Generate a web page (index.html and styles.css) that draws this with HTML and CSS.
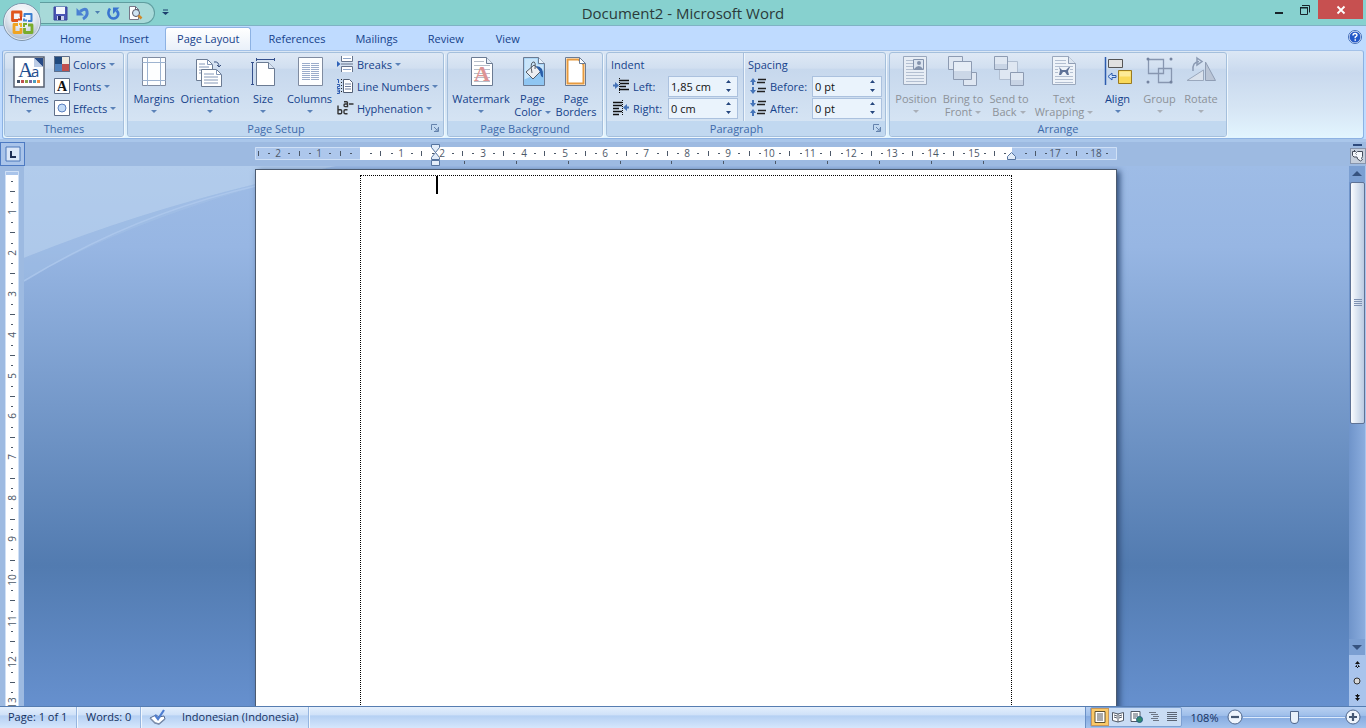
FILE: index.html
```html
<!DOCTYPE html>
<html lang="en">
<head>
<meta charset="utf-8">
<title>Document2 - Microsoft Word</title>
<link rel="stylesheet" href="styles.css">
</head>
<body>
<div class="app">
  <header class="titlebar">
    <div class="quick-access">
      <button class="qa-btn" aria-label="Save"><svg width="15" height="15" viewBox="0 0 15 15"><path d="M1 1h13v13H1z" fill="#4a55b4" stroke="#38439a"/><path d="M3 1h9v7H3z" fill="#f3f5fc"/><path d="M4 10h7v4H4z" fill="#c9cfee"/><path d="M5 10h3v4H5z" fill="#232a66"/></svg></button>
      <button class="qa-btn" aria-label="Undo"><svg width="15" height="15" viewBox="0 0 15 15"><path d="M5 5.500Q11 1 12 5.500T8 13" fill="none" stroke="#4a80d2" stroke-width="3"/><path d="M1.500 2v7.500H9z" fill="#4a80d2"/></svg></button>
      <button class="qa-arrow" aria-label="Undo list"><svg width="7" height="4" viewBox="0 0 7 4"><path d="M1 0h5L3.500 3z" fill="#4d7fb0"/></svg></button>
      <button class="qa-btn" aria-label="Repeat"><svg width="15" height="15" viewBox="0 0 15 15"><path d="M4 2.500C.500 7 3.500 12.500 7.500 12.500S14 8 10.500 4.500" fill="none" stroke="#3a75d0" stroke-width="2.600"/><path d="M7 1.500h6.500L7 8z" fill="#3a75d0"/></svg></button>
      <button class="qa-btn" aria-label="Print Preview"><svg width="16" height="16" viewBox="0 0 16 16"><path d="M2.500 1.500h6l3 3v10h-9z" fill="#fff" stroke="#778"/><path d="M8.500 1.500v3h3" fill="none" stroke="#667"/><circle cx="9" cy="8" r="3.500" fill="#cfe5f3" stroke="#556"/><path d="M11.500 10.500l3 3" stroke="#d08a2c" stroke-width="2.500"/></svg></button>
    </div>
    <button class="qa-more" aria-label="Customize Quick Access Toolbar"><svg width="7" height="7" viewBox="0 0 7 7"><path d="M1 1h5" stroke="#1d3f6e"/><path d="M0 3h7L3.500 6z" fill="#1d3f6e"/></svg></button>
    <h1 class="title">Document2 - Microsoft Word</h1>
    <div class="window-controls">
      <button class="win-btn" aria-label="Minimize"><svg width="12" height="12" viewBox="0 0 12 12"><path d="M2 8h8v2H2z" fill="#17242a"/></svg></button>
      <button class="win-btn" aria-label="Restore"><svg width="12" height="12" viewBox="0 0 12 12" fill="none" stroke="#17242a"><path d="M1.500 4h7v6.500h-7z"/><path d="M1 3.500h8M3 1.500h7.500v7" /></svg></button>
      <button class="win-btn close" aria-label="Close"><svg width="10" height="10" viewBox="0 0 10 10"><path d="M1.500 1.500l7 7M8.500 1.500l-7 7" stroke="#fff" stroke-width="1.800"/></svg></button>
    </div>
  </header>
  <button class="office" aria-label="Office Button">
    <svg width="42" height="42" viewBox="0 0 42 42">
      <defs><radialGradient id="orb" cx=".5" cy=".3" r=".75"><stop offset="0" stop-color="#fff"/><stop offset=".5" stop-color="#e3e9f1"/><stop offset="1" stop-color="#9fb0c6"/></radialGradient></defs>
      <circle cx="21" cy="21" r="18.500" fill="url(#orb)" stroke="#7f95ab"/>
      <circle cx="21" cy="21" r="17.500" fill="none" stroke="#f5f9fd" stroke-opacity=".7"/>
      <g fill="none" stroke-width="2.800" stroke-linejoin="round">
        <path d="M17 19.500H11.500V11h8.500v5" stroke="#e0561c"/>
        <path d="M23.500 16v-3h7V20H27" stroke="#3b7fd0" stroke-width="2"/>
        <path d="M17 23.500h-4v8h7V27" stroke="#f0a422"/>
        <path d="M23.500 27v4.500h7.500V24H27" stroke="#79ac2c"/>
      </g>
      <g stroke-width="2"><path d="M17 18.500h3v-3" stroke="#d33f1a" fill="none"/><path d="M23 17.500v2h3" stroke="#4b8ad4" fill="none"/><path d="M18 23h2v3" stroke="#efb42a" fill="none"/><path d="M26 23h-3v3" stroke="#79ac2c" fill="none"/></g>
    </svg>
  </button>

  <nav class="tabs">
    <button class="tab">Home</button>
    <button class="tab">Insert</button>
    <button class="tab active">Page Layout</button>
    <button class="tab">References</button>
    <button class="tab">Mailings</button>
    <button class="tab">Review</button>
    <button class="tab">View</button>
    <button class="help" aria-label="Help"><svg width="14" height="14" viewBox="0 0 14 14"><circle cx="7" cy="7" r="6.500" fill="#fff" stroke="#3f6cb8"/><circle cx="7" cy="7" r="5.500" fill="#2459c8"/><path d="M5 5.500Q5 3.500 7 3.500T9 5.300Q9 6.300 7.200 7.200V8.300" fill="none" stroke="#fff" stroke-width="1.400"/><path d="M6.500 9.200H8v1.500H6.500z" fill="#fff"/></svg></button>
  </nav>

  <div class="ribbon">
    <section class="group themes">
      <div class="tools">
        <button class="big w-themes"><svg width="32" height="32" viewBox="0 0 32 32"><path d="M1 1h30v30H1z" fill="#fff" stroke="#555f70" stroke-width="1.500"/><path d="M21 2h9v9z" fill="#274a86"/><path d="M21 2l9 9h-9z" fill="#bccce6"/><text x="5" y="21" class="icon-serif" font-size="21" fill="#1f4e8f">A</text><text x="18" y="21" class="icon-sans" font-size="15" fill="#1f4e8f">a</text><path d="M4 24h3v3H4z" fill="#44546a"/><path d="M8 24h3v3H8z" fill="#c0504d"/><path d="M12 24h3v3h-3z" fill="#8aa34a"/><path d="M16 24h3v3h-3z" fill="#7a68a0"/><path d="M20 24h3v3h-3z" fill="#4b9fc0"/><path d="M24 24h3v3h-3z" fill="#f09040"/></svg><span>Themes</span><i class="caret-down"></i></button>
        <div class="stack">
          <button class="small"><svg width="16" height="16" viewBox="0 0 16 16"><path d="M0 0h8v8H0z" fill="#1f497d"/><path d="M8 0h8v8H8z" fill="#eeece1"/><path d="M0 8h8v8H0z" fill="#4f81bd"/><path d="M8 8h8v8H8z" fill="#c0504d"/><path d="M.5.500h15v15H.5z" fill="none" stroke="#5f6f8a"/></svg>Colors<i class="caret-down"></i></button>
          <button class="small"><svg width="16" height="16" viewBox="0 0 16 16"><path d="M.5.500h15v15H.5z" fill="#fff" stroke="#5f6f8a"/><text x="8" y="13" text-anchor="middle" class="icon-serif" font-size="14" font-weight="bold" fill="#111">A</text></svg>Fonts<i class="caret-down"></i></button>
          <button class="small"><svg width="16" height="16" viewBox="0 0 16 16"><path d="M.5.500h15v15H.5z" fill="#fff" stroke="#5f6f8a"/><circle cx="8" cy="8" r="4" fill="#c4dcf8" stroke="#5b80c0"/></svg>Effects<i class="caret-down"></i></button>
        </div>
      </div>
      <h2 class="group-name">Themes</h2>
    </section>

    <section class="group setup">
      <div class="tools">
        <button class="big w-margins"><svg width="32" height="32" viewBox="0 0 32 32"><path d="M4.500 1.500h23v28h-23z" fill="#fdfeff" stroke="#7f8ba0"/><path d="M9.500 1.500v28M22.500 1.500v28M4.500 6.500h23M4.500 24.500h23" stroke="#9db3d0" fill="none"/></svg><span>Margins</span><i class="caret-down"></i></button>
        <button class="big w-orient"><svg width="32" height="32" viewBox="0 0 32 32"><path d="M2.500 3.500h11l5 5v16h-16z" fill="#fff" stroke="#6b7b93"/><path d="M13.500 3.500v5h5M5 8h6M5 11h10M5 14h10M5 17h10" stroke="#8498b8" fill="none"/><path d="M7.500 13.500h15l5 5v12h-20z" fill="#fff" stroke="#6b7b93"/><path d="M22.500 13.500v5h5M10 18h10M10 21h14M10 24h14M10 27h14" stroke="#8498b8" fill="none"/><path d="M20 6q5-1 5 5m-2-2l2 2 2-2" stroke="#39517f" fill="none"/></svg><span>Orientation</span><i class="caret-down"></i></button>
        <button class="big w-size"><svg width="32" height="32" viewBox="0 0 32 32"><path d="M9.500 6.500h12l6 6v17h-18z" fill="#fff" stroke="#6b7b93"/><path d="M21.500 6.500v6h6" fill="#dce6f4" stroke="#6b7b93"/><path d="M9 3.500h19M9.500 2v3M27.500 2v3M5.500 6v23M4 6.500h3M4 28.500h3" stroke="#35508c" fill="none"/></svg><span>Size</span><i class="caret-down"></i></button>
        <button class="big w-columns"><svg width="32" height="32" viewBox="0 0 32 32"><path d="M4.500 1.500h24v28h-24z" fill="#fdfeff" stroke="#7f8ba0"/><path d="M8 7.500h8M8 9.500h8M8 11.500h8M8 13.500h8M8 15.500h8M8 17.500h8M8 19.500h8M8 21.500h8M8 23.500h8M17 7.500h8M17 9.500h8M17 11.500h8M17 13.500h8M17 15.500h8M17 17.500h8M17 19.500h8M17 21.500h8M17 23.500h8" stroke="#9aaccb"/></svg><span>Columns</span><i class="caret-down"></i></button>
        <div class="stack">
          <button class="small"><svg width="17" height="16" viewBox="0 0 17 16"><path d="M4.500 0v5.500h11V0M4.500 16v-5.500h11V16" fill="#fff" stroke="#66748c"/><path d="M6 2.500h8M6 13.500h8" stroke="#8ea5c8"/><path d="M4 8h12" stroke="#66748c"/><path d="M0 5l3.500 3L0 11z" fill="#2f62b8"/></svg>Breaks<i class="caret-down"></i></button>
          <button class="small"><svg width="17" height="16" viewBox="0 0 17 16"><path d="M6.500 1.500h6l3 3v10h-9z" fill="#fff" stroke="#536076"/><path d="M8 6h6M8 8.500h6M8 11h6" stroke="#6e7f9d"/><path d="M0 1.500h1.500V5M0 6.500h2.500v2H.500v2H3M0 12h2.500v3.500H0M.5 13.700h2" fill="none" stroke="#2d5ab0"/><path d="M4.500 1v14" stroke="#222" stroke-dasharray="1 2"/></svg>Line Numbers<i class="caret-down"></i></button>
          <button class="small"><svg width="17" height="16" viewBox="0 0 17 16"><g fill="none" stroke="#333" stroke-width="1.400"><path d="M1 5.500v8.800M1 9.700h2.500q1.200 0 1.200 1.200v1.700q0 1.200-1.200 1.200H1"/><path d="M10.500 9.700H8.300q-1.300 0-1.300 1.200v1.700q0 1.200 1.300 1.200h2.200"/><path d="M7 1.700h2.500q1 0 1 1v4.600M10.500 4H8q-1 0-1 1.300t1 1.300h2.500"/><path d="M12 4h4.500"/></g></svg>Hyphenation<i class="caret-down"></i></button>
        </div>
      </div>
      <h2 class="group-name has-launcher">Page Setup</h2>
      <button class="launcher" aria-label="Page Setup dialog"><svg width="8" height="8" viewBox="0 0 8 8" fill="none" stroke="#6583ad"><path d="M.5 6V.500H6M3 3l3 3M7.500 3v4.500H3M7 4v3H4"/></svg></button>
    </section>

    <section class="group background">
      <div class="tools">
        <button class="big w-water"><svg width="32" height="32" viewBox="0 0 32 32"><path d="M6.500 1.500h15l6 6v22h-21z" fill="#fff" stroke="#6b7b93"/><path d="M21.500 1.500v6h6" fill="#e6edf7" stroke="#6b7b93"/><path d="M9 5.500h10M9 9.500h16M9 13.500h16M9 17.500h16M9 21.500h16M9 25.500h16" stroke="#b5bdc9"/><text x="17" y="25" text-anchor="middle" class="icon-serif" font-size="22" font-weight="bold" fill="#dd9494">A</text></svg><span>Watermark</span><i class="caret-down"></i></button>
        <button class="big w-color"><svg width="32" height="32" viewBox="0 0 32 32"><path d="M6.500 1.500h15l6 6v22h-21z" fill="#8fc6f2" stroke="#6b7b93"/><path d="M7.500 2.500h13v6h6v6l-19 9z" fill="#c9e5fa"/><path d="M21.500 1.500v6h6" fill="#eaf3fc" stroke="#6b7b93"/><path d="M9 16l8-7 7 6-8 8z" fill="#eceef1" stroke="#535b66"/><path d="M15 17q-2-10 1-11t2 7" fill="none" stroke="#535b66"/><path d="M19 10q8 0 7 11-2 1-3-5z" fill="#285ca8"/></svg><span>Page<br>Color<i class="caret-down inline"></i></span></button>
        <button class="big w-borders"><svg width="32" height="32" viewBox="0 0 32 32"><path d="M5.500 1.500h14l6 6v22h-20z" fill="#fff" stroke="#6b7b93"/><path d="M7.500 3.500h11l5 5v19h-16z" fill="none" stroke="#e69a3f" stroke-width="2"/><path d="M19.500 1.500v6h6z" fill="#fff" stroke="#6b7b93"/></svg><span>Page<br>Borders</span></button>
      </div>
      <h2 class="group-name">Page Background</h2>
    </section>

    <section class="group paragraph">
      <div class="tools">
        <div class="fields indent">
          <h3>Indent</h3>
          <div class="field"><svg width="17" height="16" viewBox="0 0 17 16"><path d="M6 2.500h10M7 5.500h9M7 8.500h6M6 11.500h10" stroke="#111" stroke-width="1.500"/><path d="M6.500 0v16" stroke="#111" stroke-dasharray="1 1"/><path d="M0 6.500h2V4l4 3.500L2 11V8.500H0z" fill="#4473b8"/></svg><label for="left">Left:</label><span class="spin"><input id="left" type="text" value="1,85 cm"><svg width="7" height="14" viewBox="0 0 7 14"><path d="M1 4h5L3.500 1zM1 10h5l-2.500 3z" fill="#26477e"/></svg></span></div>
          <div class="field"><svg width="17" height="16" viewBox="0 0 17 16"><path d="M0 2.500h9M0 5.500h9M0 8.500h6M0 11.500h9M0 14.500h6" stroke="#111" stroke-width="1.500"/><path d="M9.500 0v16" stroke="#111" stroke-dasharray="1 1"/><path d="M16 6.500h-2V4l-4 3.500L14 11V8.500h2z" fill="#4473b8"/></svg><label for="right">Right:</label><span class="spin"><input id="right" type="text" value="0 cm"><svg width="7" height="14" viewBox="0 0 7 14"><path d="M1 4h5L3.500 1zM1 10h5l-2.500 3z" fill="#26477e"/></svg></span></div>
        </div>
        <div class="fields spacing">
          <h3>Spacing</h3>
          <div class="field"><svg width="17" height="16" viewBox="0 0 17 16"><path d="M8 1.500h8M7 4.500h8M8 10.500h8M7 13.500h8" stroke="#222" stroke-width="1.300"/><path d="M3 0L0 4h2v3h2V4h2zM3 16l-3-4h2V9h2v3h2z" fill="#4473b8"/></svg><label for="before">Before:</label><span class="spin"><input id="before" type="text" value="0 pt"><svg width="7" height="14" viewBox="0 0 7 14"><path d="M1 4h5L3.500 1zM1 10h5l-2.500 3z" fill="#26477e"/></svg></span></div>
          <div class="field"><svg width="17" height="16" viewBox="0 0 17 16"><path d="M8 1.500h8M7 4.500h8M8 10.500h8M7 13.500h8" stroke="#222" stroke-width="1.300"/><path d="M3 7L0 3h2V0h2v3h2zM3 9l-3 4h2v3h2v-3h2z" fill="#4473b8"/></svg><label for="after">After:</label><span class="spin"><input id="after" type="text" value="0 pt"><svg width="7" height="14" viewBox="0 0 7 14"><path d="M1 4h5L3.500 1zM1 10h5l-2.500 3z" fill="#26477e"/></svg></span></div>
        </div>
      </div>
      <h2 class="group-name has-launcher">Paragraph</h2>
      <button class="launcher" aria-label="Paragraph dialog"><svg width="8" height="8" viewBox="0 0 8 8" fill="none" stroke="#6583ad"><path d="M.5 6V.500H6M3 3l3 3M7.500 3v4.500H3M7 4v3H4"/></svg></button>
    </section>

    <section class="group arrange">
      <div class="tools">
        <button class="big w-position" disabled><svg width="32" height="32" viewBox="0 0 32 32"><path d="M3.500.500h23v28h-23z" fill="#e7edf5" stroke="#9aa8bd"/><path d="M6 4.500h7M6 7.500h7M6 10.500h7M6 13.500h7M6 16.500h18M6 19.500h18M6 22.500h18M6 25.500h18" stroke="#b3bfd1"/><path d="M13.500 3.500h10v10h-10z" fill="#dbe4f0" stroke="#8393ad"/><circle cx="19" cy="7" r="2" fill="#8393ad"/><path d="M14 13q5-6 9 0z" fill="#8393ad"/></svg><span>Position</span><i class="caret-down"></i></button>
        <button class="big w-bring" disabled><svg width="32" height="32" viewBox="0 0 32 32" stroke="#8d9bb2" fill="#dfe7f2"><path d="M1.500.500h14v13h-14zM16.500 16.500h13v13h-13z"/><path d="M6.500 5.500h18v18h-18z" fill="#e6edf6"/><path d="M7 15h17v8H7z" fill="#cbd7e7" stroke="none"/></svg><span>Bring to<br>Front<i class="caret-down inline"></i></span></button>
        <button class="big w-send" disabled><svg width="32" height="32" viewBox="0 0 32 32" stroke="#8d9bb2" fill="#dfe7f2"><path d="M6.500 5.500h18v18h-18z" stroke="#b1bed1"/><path d="M1.500.500h13v13h-13zM17.500 16.500h13v13h-13z"/><path d="M2 8h12v5H2zM18 24h12v5H18z" fill="#c8d4e5" stroke="none"/></svg><span>Send to<br>Back<i class="caret-down inline"></i></span></button>
        <button class="big w-wrap" disabled><svg width="32" height="32" viewBox="0 0 32 32"><path d="M4.500.500h16l7 7v21h-23z" fill="#eef3f9" stroke="#9aa8bd"/><path d="M20.500.500v7h7" fill="#dce5f0" stroke="#8f9db4"/><path d="M7 4.500h11M7 7.500h11M7 10.500h18M7 13.500h3M22 13.500h3M7 16.500h3M22 16.500h3M7 20.500h18M7 23.500h18M7 26.500h18" stroke="#b3bfd1"/><path d="M11 11l3 3h4l3-3h1l-2 4 1 4h-2l-2-3h-2l-2 3h-2l1-5z" fill="#5f7297"/></svg><span>Text<br>Wrapping<i class="caret-down inline"></i></span></button>
        <button class="big w-align"><svg width="32" height="32" viewBox="0 0 32 32"><path d="M3.500 1v28" stroke="#2d5cae" stroke-width="1.500"/><path d="M6.500 3.500h14v8h-14z" fill="#e1e1e1" stroke="#555"/><path d="M16.500 14.500h13v13h-13z" fill="#f9d95a" stroke="#9a7a20"/><path d="M17.500 15.500h11v5h-11z" fill="#fdeb98"/><path d="M6 20.500l4-3.500v2.500h4v2h-4V24z" fill="#cfe2fb" stroke="#2d5cae"/></svg><span>Align</span><i class="caret-down"></i></button>
        <button class="big w-group" disabled><svg width="32" height="32" viewBox="0 0 32 32" fill="none" stroke="#8796b0"><path d="M4.500 3.500h15v14h-15zM14.500 12.500h13v14h-13z" stroke-width="1.300"/><g fill="#74839f" stroke="none"><circle cx="4" cy="3" r="1.500"/><circle cx="27" cy="3" r="1.500"/><circle cx="4" cy="26" r="1.500"/><circle cx="27" cy="26" r="1.500"/></g></svg><span>Group</span><i class="caret-down"></i></button>
        <button class="big w-rotate" disabled><svg width="32" height="32" viewBox="0 0 32 32"><path d="M18.500 24.500V14L2 24.500z" fill="#d9e1ec" stroke="#9aa8bd"/><path d="M20.500 24.500V6l10 18.500z" fill="#bac5d6" stroke="#8f9db4"/><path d="M8 15Q7 6 14 5.500M12 2l5 3.500-5 3.500z" fill="none" stroke="#8b9ab3" stroke-width="1.500"/></svg><span>Rotate</span><i class="caret-down"></i></button>
      </div>
      <h2 class="group-name">Arrange</h2>
    </section>
  </div>

  <main class="editor">
    <div class="tab-selector-cell"><button class="tab-selector" aria-label="Tab selector"><svg width="16" height="16" viewBox="0 0 16 16"><path d="M1 1h14v14H1z" fill="#dbe7f8" stroke="#4a76b8"/><path d="M6 5v6h5" fill="none" stroke="#1e2f55" stroke-width="2"/></svg></button></div>
    <div class="hruler-cell"><svg id="hruler" class="hruler" width="862" height="24" viewBox="0 0 862 24"></svg></div>
    <div class="corner"><i class="splitter"></i><button class="ruler-toggle" aria-label="View Ruler"><svg width="12" height="12" viewBox="0 0 12 12" fill="#f4f7fc" stroke="#444b5a"><path d="M.5 1.500h3l1 1 1-1h5v5l-1 2 1 1-2 1.500-3-2-.5-2h-3L.5 5.500z"/><path d="M2 .500h1M3.500 3.500l1 1" /></svg></button></div>
    <div class="vruler-cell"><svg id="vruler" class="vruler" width="14" height="540" viewBox="0 0 14 540"></svg></div>
    <div class="canvas">
      <svg class="swoosh" width="340" height="120" viewBox="0 0 340 120">
        <path d="M0 0H312Q140 35 0 92z" fill="#c6dcf2" fill-opacity=".5"/>
        <path d="M0 92Q140 35 312 0Q120 45 0 115z" fill="#a9c6e8" fill-opacity=".35"/>
        <path d="M0 115Q110 48 232 20" stroke="#b0cbee" stroke-opacity=".7" stroke-width="1.500" fill="none"/>
      </svg>
      <article class="page"><div class="text-area" contenteditable="true" spellcheck="false"><i class="text-caret"></i></div></article>
    </div>
    <div class="scrollbar">
      <button class="arrow" aria-label="Scroll up"><svg width="10" height="6" viewBox="0 0 10 6"><path d="M0 5h10L5 0z" fill="#36537f"/></svg></button>
      <div class="track"><div class="thumb"><svg width="8" height="8" viewBox="0 0 8 8"><path d="M0 .500h8M0 2.500h8M0 4.500h8M0 6.500h8" stroke="#7f92b3"/></svg></div></div>
      <button class="arrow" aria-label="Scroll down"><svg width="10" height="6" viewBox="0 0 10 6"><path d="M0 1h10L5 6z" fill="#36537f"/></svg></button>
      <div class="browse">
        <button aria-label="Previous page"><svg width="7" height="8" viewBox="0 0 7 8"><path d="M1 4h5L3.500 1zM1 7h5L3.500 4zM3 4h1v4H3z" fill="#111"/></svg></button>
        <button aria-label="Select browse object"><svg width="8" height="8" viewBox="0 0 8 8"><circle cx="4" cy="4" r="3" fill="#d8d8d8" stroke="#333"/></svg></button>
        <button aria-label="Next page"><svg width="7" height="8" viewBox="0 0 7 8"><path d="M1 1h5L3.500 4zM1 4h5L3.500 7zM3 0h1v4H3z" fill="#111"/></svg></button>
      </div>
    </div>
  </main>

  <footer class="status">
    <button class="cell page-no">Page: 1 of 1</button>
    <button class="cell words">Words: 0</button>
    <button class="cell proof" aria-label="Proofing"><svg width="18" height="16" viewBox="0 0 18 16"><path d="M1 9l6-3 3 2 5-1 1 3-6 5-4-1z" fill="#fff" stroke="#54698f"/><path d="M1 9l5 5 4 1 6-5" fill="none" stroke="#7b8dab" stroke-width="1.500"/><path d="M6 6l3 4 6-9" fill="none" stroke="#4f7ed0" stroke-width="2.200"/></svg></button>
    <button class="cell language">Indonesian (Indonesia)</button>
    <div class="status-right">
      <div class="views">
        <button class="view on" aria-label="Print Layout"><svg width="12" height="12" viewBox="0 0 12 12"><path d="M1 .500h10v11H1z" fill="#fff" stroke="#5e5131"/><path d="M3 3h6M3 5h6M3 7h6M3 9h6" stroke="#555"/></svg></button>
        <button class="view" aria-label="Full Screen Reading"><svg width="12" height="12" viewBox="0 0 12 12"><path d="M.5 1.500L6 3l5.500-1.500v8L6 11 .500 9.500zM6 3v8" fill="#fff" stroke="#505967"/><path d="M2 4l3 1M2 6l3 1M7 5l3-1M7 7l3-1" stroke="#505967"/></svg></button>
        <button class="view" aria-label="Web Layout"><svg width="13" height="12" viewBox="0 0 13 12"><path d="M1 .500h9v10H1z" fill="#fff" stroke="#505967"/><path d="M3 3h5M3 5h5M3 7h3" stroke="#505967"/><circle cx="9.500" cy="8.500" r="3" fill="#348b6b" stroke="#235f8b"/></svg></button>
        <button class="view" aria-label="Outline"><svg width="12" height="12" viewBox="0 0 12 12"><path d="M1 1.500h7M3 3.500h7M5 5.500h6M3 7.500h7M5 9.500h6" stroke="#6d7686"/></svg></button>
        <button class="view" aria-label="Draft"><svg width="12" height="12" viewBox="0 0 12 12"><path d="M1 1.500h10M1 3.500h10M1 5.500h10M1 7.500h10M1 9.500h10" stroke="#5b6575"/></svg></button>
      </div>
      <button class="zoom-value">108%</button>
      <button class="round" aria-label="Zoom out"><svg width="16" height="16" viewBox="0 0 16 16"><circle cx="8" cy="8" r="7" fill="#eef4fc" stroke="#50678c"/><path d="M4 8h8" stroke="#465873" stroke-width="2.200"/></svg></button>
      <input class="zoom" type="range" min="0" max="200" value="101" aria-label="Zoom">
      <button class="round" aria-label="Zoom in"><svg width="16" height="16" viewBox="0 0 16 16"><circle cx="8" cy="8" r="7" fill="#eef4fc" stroke="#50678c"/><path d="M4 8h8M8 4v8" stroke="#465873" stroke-width="2.200"/></svg></button>
    </div>
  </footer>
</div>
<script src="rulers.js"></script>
</body>
</html>
```

FILE: styles.css
```css
* { box-sizing: border-box; }
body { margin: 0; font-family: "Open Sans", "Noto Sans", sans-serif; font-size: 11px; line-height: 13px; color: #15428b; }
button { font: inherit; color: inherit; background: none; border: 0; padding: 0; margin: 0; }
h1, h2, h3 { margin: 0; font-weight: normal; font-size: inherit; }
svg { display: block; flex: none; }
.app { position: relative; height: 100vh; display: flex; flex-direction: column; background: #bfdbff; overflow: hidden; }
.icon-serif { font-family: "Liberation Serif", serif; }
.icon-sans { font-family: "Open Sans", sans-serif; }

.titlebar { flex: none; height: 26px; display: grid; grid-template-columns: 172px 1fr 172px; align-items: start; background: #87d1cf; border-bottom: 1px solid #7fb3c4; }
.quick-access { grid-area: 1 / 1; display: flex; align-items: center; gap: 2px; margin: 2px 0 0 40px; width: 115px; height: 22px; padding-left: 10px; border: 1px solid #5f9d9f; border-left: 0; border-radius: 0 11px 11px 0; background: #a8dad9; }
.qa-btn { width: 20px; display: flex; justify-content: center; }
.qa-arrow { width: 7px; }
.qa-more { grid-area: 1 / 1; justify-self: end; margin: 9px 3px 0 0; }
.title { grid-area: 1 / 2; text-align: center; color: #2b3a3a; font-size: 15px; line-height: 27px; }
.window-controls { grid-area: 1 / 3; display: flex; justify-content: flex-end; margin-right: 3px; }
.win-btn { width: 26px; height: 19px; display: flex; align-items: center; justify-content: center; }
.win-btn.close { width: 45px; background: #c75050; }
.office { position: absolute; left: 1px; top: 1px; }

.tabs { flex: none; height: 24px; display: flex; align-items: flex-end; padding-left: 48px; }
.tab { height: 22px; padding: 0 12px 1px; margin-right: 4px; min-width: 54px; text-align: center; }
.tab.active { background: linear-gradient(#fff, #e9f0f9); border: 1px solid #8db2e3; border-bottom: 0; border-radius: 3px 3px 0 0; padding: 0 11px 1px; height: 23px; }
.tab.active ~ .tab { padding: 0 13px 1px; }
.help { margin: 0 4px 6px auto; }

.ribbon { flex: none; display: flex; gap: 3px; margin: 0 2px; padding: 1px; height: 89px; border: 1px solid #8db2e3; border-radius: 3px; background: linear-gradient(#dbe7f5, #c9d9ee 25%, #d6e5f4 65%, #e2f5ff); border-top-color: #a3c1e8; }
.group { flex: none; position: relative; display: flex; flex-direction: column; border: 1px solid #a4bfdc; border-radius: 3px; background: linear-gradient(#dee8f5, #d1dff0 18%, #c7d8ed 20%, #d9e7f5); box-shadow: 1px 1px 0 #eff7fd; overflow: hidden; }
.themes { width: 120px; }
.setup { width: 317px; }
.background { width: 156px; }
.paragraph { width: 280px; }
.arrange { width: 338px; }
.tools { flex: 1; min-height: 0; display: flex; padding: 0 2px; }
.group-name { flex: none; height: 15px; line-height: 16px; text-align: center; color: #3e6aaa; background: #c1d8f0; }
.group-name.has-launcher { padding-right: 19px; }
.launcher { position: absolute; right: 4px; bottom: 4px; }
.big { display: flex; flex-direction: column; align-items: center; padding-top: 3px; flex: none; }
.big > span { margin-top: 4px; white-space: nowrap; }
.big:disabled { color: #8d9299; }
.caret-down { display: block; width: 0; border: 3px solid transparent; border-top-color: #5b82b8; border-bottom: 0; margin-top: 5px; }
.caret-down.inline { display: inline-block; margin: 0 0 2px 3px; }
.big:disabled .caret-down { border-top-color: #a9afb8; }
.w-themes { width: 43px; }
.w-margins { width: 48px; }
.w-orient { width: 64px; }
.w-size { width: 42px; }
.w-columns { width: 51px; }
.w-water { width: 62px; }
.w-color { width: 41px; }
.w-borders { width: 46px; }
.w-position { width: 48px; }
.w-bring { width: 46px; }
.w-send { width: 46px; }
.w-wrap { width: 64px; }
.w-align { width: 43px; }
.w-group { width: 41px; }
.w-rotate { width: 42px; }
.stack { display: flex; flex-direction: column; padding: 0 0 0 4px; }
.setup .stack { padding-left: 2px; }
.small { display: flex; align-items: center; gap: 3px; height: 22px; white-space: nowrap; }
.small .caret-down { margin: 0; }
.fields { padding: 1px 3px 0 2px; width: 132px; }
.fields.spacing { padding: 1px 0 0 4px; margin-left: 2px; border-left: 1px solid #a8bfdd; width: 139px; box-shadow: inset 1px 0 0 #eef5fc; }
.fields h3 { height: 21px; line-height: 22px; }
.field { display: flex; align-items: center; height: 22px; padding-left: 2px; }
.field label { flex: 1; padding-left: 3px; }
.spin { display: flex; align-items: center; width: 70px; height: 21px; border: 1px solid #abc1de; background: #eaf3fc; padding-right: 5px; }
.spin input { flex: 1; min-width: 0; height: 18px; border: 0; padding: 0 0 0 2px; background: transparent; font: inherit; color: #111; }

.editor { flex: 1; min-height: 0; display: grid; grid-template-columns: 24px 1fr 17px; grid-template-rows: 27px minmax(0, 1fr); background: #9dbae1; }
.tab-selector-cell, .hruler-cell, .corner { padding-top: 3px; box-shadow: inset 0 3px 0 #a9c6ea; }
.tab-selector { width: 25px; height: 24px; border: 1px solid #4d7ac2; background: #a9c4ea; display: flex; align-items: center; justify-content: center; }
.hruler-cell { display: flex; justify-content: center; min-width: 0; padding-right: 2px; }
.corner { display: flex; flex-direction: column; align-items: center; gap: 2px; padding-top: 5px; }
.splitter { width: 9px; height: 2px; background: #2d4a7c; }
.ruler-toggle { width: 16px; height: 16px; border: 1px solid #8795ad; background: #c6cfdc; display: flex; align-items: center; justify-content: center; }
.vruler-cell { padding: 3px 0 0 5px; overflow: hidden; }
.tick { stroke: #4c5868; }
.ruler-num { font: 10px "Open Sans", sans-serif; fill: #4c5868; text-anchor: middle; }
.canvas { position: relative; display: flex; justify-content: center; padding: 3px 2px 0 0; overflow: hidden; background: linear-gradient(#9ebce6, #97b6e3 15%, #527bb0 74%, #6690ce); }
.swoosh { position: absolute; left: 0; top: 0; }
.page { position: relative; width: 862px; height: 1200px; flex: none; background: #fff; border: 1px solid #4c5b70; box-shadow: 3px 2px 6px #33507c; padding: 5px 104px; }
.text-area { height: 1150px; border: 1px dotted #000; padding-left: 75px; outline: 0; }
.text-caret { display: block; width: 2px; height: 18px; background: #000; }

.scrollbar { display: flex; flex-direction: column; background: #a9c4ec; padding: 0 1px 0 0; }
.arrow { height: 16px; background: #7b9fd2; display: flex; align-items: center; justify-content: center; flex: none; }
.track { flex: 1; background: linear-gradient(90deg, #6f94ca, #8badde); min-height: 0; }
.thumb { height: 53%; border: 1px solid #5f7396; border-radius: 2px; background: linear-gradient(90deg, #fafcff, #d9e3f0 50%, #bccbe2); margin-left: 1px; display: flex; align-items: center; justify-content: center; }
.browse { height: 51px; display: flex; flex-direction: column; align-items: center; justify-content: space-around; flex: none; }

.status { flex: none; height: 22px; display: flex; border-top: 1px solid #567db1; background: linear-gradient(#e4effc, #cfe1f8 38%, #b5d0f3 42%, #d5e6fc); color: #15315f; }
.cell { border-right: 1px solid #96b5df; box-shadow: 1px 0 0 #f1f7fe; text-align: left; padding: 0 8px 2px; }
.page-no { width: 77px; }
.words { width: 64px; padding-left: 9px; }
.proof { border: 0; box-shadow: none; width: 32px; }
.language { width: 136px; padding-left: 9px; }
.status-right { margin-left: auto; display: flex; align-items: center; padding: 0 5px 1px 4px; background: linear-gradient(#b8d0f2, #9fbfea 40%, #86abe0 45%, #a4c3ed); border-left: 1px solid #6a90c6; }
.views { display: flex; border: 1px solid #7da0d2; border-radius: 2px; background: #c9dcf4; }
.view { width: 18px; height: 18px; display: flex; align-items: center; justify-content: center; }
.view.on { background: #fbc967; border: 1px solid #c9995a; }
.zoom-value { width: 45px; text-align: center; }
.zoom { appearance: none; width: 102px; height: 16px; margin: 0; background: linear-gradient(#dceafc, #dceafc) center / 100% 1px no-repeat; }
.zoom::-webkit-slider-thumb { appearance: none; width: 9px; height: 13px; background: #e9f1fb; border: 1px solid #50678c; border-radius: 1px 1px 5px 5px; }
```

FILE: rulers.js
```js
const CM = 40.9;
const H0 = 105;

function tick(x, y, dx, dy) {
  return `<path class="tick" d="M${x} ${y}l${dx} ${dy}"/>`;
}

function horizontal() {
  let out = '<path d="M0 5h862v13H0z" fill="#adc7ec"/><path d="M.5 5.500h861v12H.500z" fill="none" stroke="#cfe0f6"/><path d="M105 5h652v13H105z" fill="#fff"/>';
  for (let i = -10; i <= 73; i++) {
    const x = Math.round(H0 + i * CM / 4);
    if (i % 4 === 0) {
      if (i !== 0 && i !== 64) out += `<text class="ruler-num" x="${x}" y="15">${Math.abs(i / 4)}</text>`;
    } else if (i % 2 === 0) {
      out += tick(x + 0.5, 9, 0, 5);
    } else {
      out += tick(x, 11.5, 2, 0);
    }
  }
  for (let k = 2; k <= 12; k++) out += tick(Math.round(H0 + k * 51.9) + 0.5, 19, 0, 3);
  out += '<g fill="#e3edf9" stroke="#56749f"><path d="M176.500 2.500h8v3l-4 5-4-5z"/><path d="M176.500 17.500v-2l4-5 4 5v2z"/><path d="M176.500 18.500h8v5h-8z"/><path d="M752.500 17.500v-3l4-4 4 4v3z"/></g>';
  return out;
}

function vertical() {
  let out = '<path d="M.5 2.500h13V540H.500z" fill="#fff" stroke="#cfe0f6"/><path d="M1 3h12v3H1z" fill="#a9c4ea"/>';
  for (let i = 1; i <= 52; i++) {
    const y = Math.round(2 + i * CM / 4);
    if (i % 4 === 0) out += `<text class="ruler-num" transform="translate(11 ${y}) rotate(-90)">${i / 4}</text>`;
    else if (i % 2 === 0) out += tick(5, y + 0.5, 5, 0);
    else out += tick(6, y + 0.5, 2, 0);
  }
  return out;
}

document.getElementById('hruler').innerHTML = horizontal();
document.getElementById('vruler').innerHTML = vertical();
```
